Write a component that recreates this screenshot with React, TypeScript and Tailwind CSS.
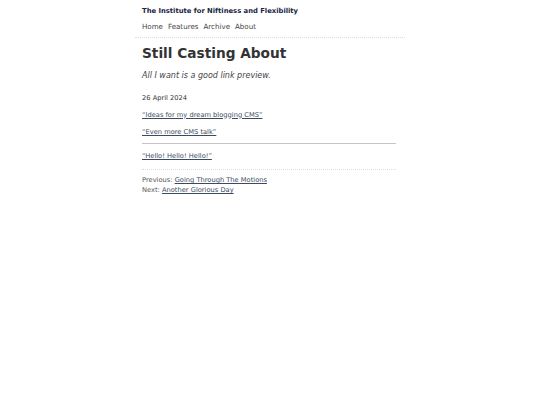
const font = "font-['DejaVu_Sans',sans-serif]";

export default function App() {
	return (
		<div className={`${font} min-h-[405px] bg-white text-[#333] text-[7px] leading-[1.25]`}>
			<div className="mx-auto w-[270px]">
				<header className="border-b border-dotted border-[#ddd] px-[7px] pt-[7px] pb-[6px]">
					<div className="font-bold text-[#1a2540] text-[6.8px] leading-[9px]">The Institute for Niftiness and Flexibility</div>
					<nav className="mt-[6px] flex gap-[5px] text-[#444] text-[7.1px] leading-[9px]">
						<a>Home</a>
						<a>Features</a>
						<a>Archive</a>
						<a>About</a>
					</nav>
				</header>
				<main className="px-[7px]">
					<h1 className="mt-[6px] text-[13.7px] font-bold text-[#333] leading-[18px]">Still Casting About</h1>
					<p className="mt-[9px] italic text-[8px] leading-[10px] text-[#444]">All I want is a good link preview.</p>
					<p className="mt-[13px] text-[6.7px] leading-[9px] text-[#333]">26 April 2024</p>
					<ul className="mt-[7.5px] text-[6.7px] leading-[9px] text-[#3a4a60]">
						<li><a className="underline">“Ideas for my dream blogging CMS”</a></li>
						<li className="mt-[8px]"><a className="underline">“Even more CMS talk”</a></li>
					</ul>
					<div className="mt-[6.5px] mr-[2px] border-t border-[#c4c4c4]" />
					<p className="mt-[7.5px] text-[6.7px] leading-[9px] text-[#3a4a60]"><a className="underline">“Hello! Hello! Hello!”</a></p>
					<div className="mt-[8.5px] mr-[2px] border-t border-dotted border-[#ddd]" />
					<div className="mt-[5px] text-[6.7px] text-[#555] leading-[10px]">
						<div>Previous: <a className="underline text-[#3a4a60]">Going Through The Motions</a></div>
						<div>Next: <a className="underline text-[#3a4a60]">Another Glorious Day</a></div>
					</div>
				</main>
			</div>
		</div>
	);
}
